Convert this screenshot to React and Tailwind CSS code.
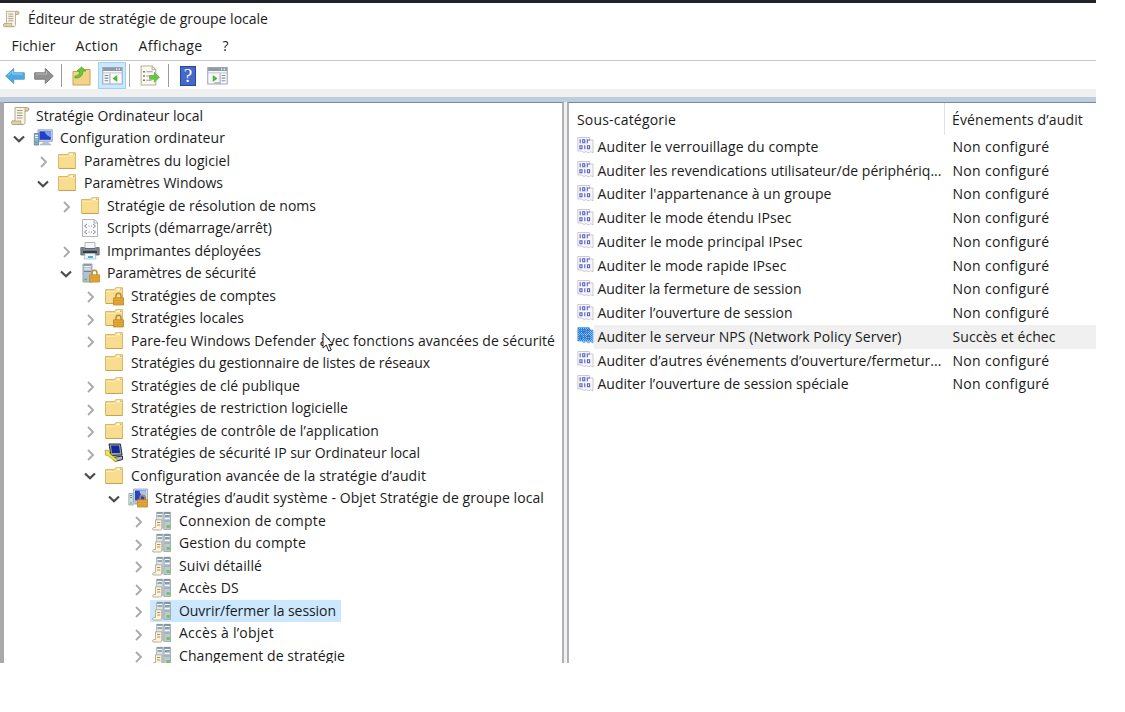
import React, { useLayoutEffect, useRef } from 'react';

// Spreads a line of text over a fixed width by adjusting its tracking.
function Label({ w, children }) {
  const ref = useRef(null);
  useLayoutEffect(() => {
    const el = ref.current;
    el.style.letterSpacing = '0px';
    const natural = el.getBoundingClientRect().width;
    el.style.letterSpacing = `${(w - natural) / children.length}px`;
  }, [w, children]);
  return <span ref={ref} className="inline-block shrink-0 whitespace-pre">{children}</span>;
}

const Svg = ({ size = 'size-5', vb = '0 0 20 20', children }) => (
  <svg className={`${size} shrink-0`} viewBox={vb} fill="none">{children}</svg>
);

const Scroll = ({ size }) => (
  <Svg size={size}>
    <path d="M5 1.5h12.5c1.8 0 1.8 3.5 0 3.5H15v11.5c0 1.5-1 2-2 2H3c-2 0-2-3.5 0-3.5h2z" fill="#f8f3e2" stroke="#b5aa8c" />
    <path d="M15 5V3c0-2 4-2 3.5.5 0 1.500-1 1.500-3.500 1.500zM3 15h8c-1 1.500 0 3.500 2 3.500H3c-2 0-2-3.500 0-3.500z" fill="#dfd2aa" stroke="#ab9f7d" strokeWidth=".8" />
    <path d="M7 4.5h5.5M7 7h5.5M7 9.5h5.5M7 12h5.5" stroke="#a29a88" />
  </Svg>
);
const FolderShape = () => (
  <>
    <path d="M1.500 3.500h9l1.200-1.800h6.800v15.600h-17z" fill="#f6d984" stroke="#d9b86c" />
    <path d="M2 17.500h16.500" stroke="#c9a350" />
    <path d="M2.200 6.300h9.300l1.200-1.600h5.100v12H2.200z" fill="#f8dd90" />
    <path d="M12.500 3.300h3.500" stroke="#fffbe8" strokeWidth="1.600" />
    <path d="M12.500 4.500h4v-1.500" stroke="#c9a350" strokeWidth=".8" />
    <path d="M2 5.500h9.300l1-1h5.700" stroke="#fff0bd" strokeWidth=".8" />
  </>
);
const Folder = () => <Svg><FolderShape /></Svg>;
const Lock = () => (
  <g>
    <path d="M12 12V10c0-3.600 5-3.600 5 0v2" stroke="#b98a3a" strokeWidth="1.500" />
    <path d="M9.500 11.800h10V19h-10z" fill="#e3a935" stroke="#bf8423" strokeWidth=".8" />
    <path d="M10 14.500h9M10 17h9" stroke="#cc9430" strokeWidth=".7" />
  </g>
);
const FolderLock = () => <Svg><FolderShape /><Lock /></Svg>;
const Computer = () => (
  <Svg>
    <path d="M5 1.800h14.300v11.500H5z" fill="#cbd4e6" stroke="#9aa5c0" />
    <path d="M6.500 3.300h11.300v8.500H6.500z" fill="#2040cc" />
    <path d="M11.500 3.300h6.300v6c-3-1-5.500-3-6.300-6z" fill="#7ba0f0" />
    <path d="M10 13.500h5l2 2.500H9z" fill="#b7c1d1" />
    <path d="M1.300 5.500h4.400V17H1.300z" fill="#8fb3c4" stroke="#5a7f96" strokeWidth=".8" />
    <path d="M2 7.500h3M2 9.500h3" stroke="#e7f5f4" />
    <path d="M2.500 14.500h2" stroke="#4ba85a" strokeWidth="1.300" />
    <path d="M7 16.500h11" stroke="#b3bbc8" strokeWidth="1.600" />
  </Svg>
);
const Script = () => (
  <Svg>
    <path d="M2.500 1.500h12l3 3v14h-15z" fill="#fbfbfc" stroke="#b4b6bc" />
    <path d="M14 1.500v3.500h3.500" stroke="#a8abb2" />
    <path d="M7 6 4.500 8 7 10M13 6l2.500 2L13 10M8.500 8h1M11 8h1M7 12l-2.500 2L7 16M13 12l2.500 2-2.500 2M8.500 14h1M11 14h1" stroke="#77798c" strokeWidth=".9" />
  </Svg>
);
const Printer = () => (
  <Svg>
    <path d="M5 1.500h10V8H5z" fill="#f3f6f9" stroke="#a9b5bf" />
    <path d="M.8 6.500h3.500V9h11.400V6.500h3.500V14H.8z" fill="#7b838b" stroke="#636b73" strokeWidth=".8" />
    <path d="M5 7.800h10" stroke="#4a5259" strokeWidth="1.200" />
    <path d="M3 11h14" stroke="#353b41" strokeWidth="2" />
    <path d="M5 12.500h10l1 5.500H4z" fill="#edf4f8" stroke="#a4b2bd" strokeWidth=".7" />
    <path d="M8 16h5" stroke="#45b0d4" strokeWidth="2" />
  </Svg>
);
const ServerLock = () => (
  <Svg>
    <path d="M3 1h9v18H3z" fill="#b3c2cf" stroke="#93a4b3" />
    <path d="M4.500 3.500h6M4.500 6h6" stroke="#f5fafc" strokeWidth="1.200" />
    <path d="M4 2h7M4 8.500h7" stroke="#65798c" strokeWidth=".9" />
    <path d="M4.500 16.500h2.500" stroke="#5bad61" strokeWidth="1.500" />
    <Lock />
  </Svg>
);
const IpSec = () => (
  <Svg>
    <path d="M5 1h11.500l1.500 11-11 .5z" fill="#9a9fac" stroke="#262932" />
    <path d="M7 2.500h8l1 7.500H8z" fill="#10299a" />
    <path d="M8 14.500 18.500 13v3.500L11 18.500z" fill="#b0b4bd" stroke="#292c35" />
    <path d="m1.200 7 3.600.8 1.500 3.200 7 6-1.300 2-7.500-6-3-1z" fill="#f4e732" stroke="#8f8620" strokeWidth=".6" />
  </Svg>
);
const AuditPc = () => (
  <Svg>
    <path d="M5.500 1h14v13h-14z" fill="#cdd6e8" stroke="#a6b2ca" />
    <path d="M7 2.500h11v10H7z" fill="#2345c8" />
    <path d="M11.500 2.500H18v7c-4-1-6-3-6.500-7z" fill="#a9c2f2" />
    <path d="M.8 5.500h4.500V17H.8z" fill="#d2dee2" stroke="#8799a6" strokeWidth=".7" />
    <path d="M2 7.500h2M2 9.500h2M2 15h2" stroke="#52a659" />
    <path d="M6 15.500h4" stroke="#aab3c7" strokeWidth="2" />
    <Lock />
  </Svg>
);
const Servers = () => (
  <Svg>
    <path d="M4.500 1.300h6.300v16H4.500z" fill="#dae4ea" stroke="#a3b1bb" strokeWidth=".8" />
    <path d="M11.800 1.300h6.700v17.200h-6.700z" fill="#bccad4" stroke="#93a2ad" strokeWidth=".8" />
    <path d="M5 2h5.500M12.300 2H18M5.500 5h4.500M13 5h4.500" stroke="#596b78" strokeWidth="1.100" />
    <path d="M5.500 3.500h4.500M13 3.500h4.500M12.700 7.500h5" stroke="#f7fbfd" />
    <path d="M12.500 10h5.500" stroke="#8b9ca8" />
    <path d="M14.500 15.500h3.300" stroke="#79c063" strokeWidth="3" />
    <path d="M3.500 8.800h6.300V17c0 2-1 2-2 2H1.500c-1.500 0-1-2.500.5-2.500h1.500z" fill="#fbf4de" stroke="#a99e7d" strokeWidth=".8" />
    <path d="M5 11.500h3.300M5 14h3.300" stroke="#b98b4e" />
  </Svg>
);
const Bits = ({ active }) => (
  <Svg size="-mt-0.5 size-[17px]" vb="0 0 17 17">
    <path d="M.8.500h11.400l.8 2.500h3V16l-2.500-1.500L12 16l-3-1.500-2 1-2.500-1.500H.8z" fill={active ? '#8fc0f4' : '#f7f7fb'} stroke={active ? '#5a9be0' : '#bcbcc8'} strokeWidth=".8" />
    <path d="M3.200 2.300v4M5.700 2.800h2.100v3H5.700zM10.300 2.300v4M11 3h2M2.900 8.800H5v3H2.900zM7.800 8.300v4M10.500 8.800h2.100v3h-2.100z" stroke={active ? '#2369bd' : '#5a5ec0'} strokeWidth="1.100" />
    {active && <path d="M1 1.500h11M1 3.500h14.500M1 5.500h14.500M1 7.500h14.500M1 9.500h14.500M1 11.500h14.500M1 13.500h14.500" stroke="#2b7fd6" strokeDasharray="1 1" />}
    {active && <path d="M2 2.500h11M2 4.500h14M2 6.500h14M2 8.500h14M2 10.500h14M2 12.500h14" stroke="#2b7fd6" strokeDasharray="1 1" />}
  </Svg>
);

const icons = { scroll: Scroll, folder: Folder, lock: FolderLock, computer: Computer, script: Script, printer: Printer, security: ServerLock, ip: IpSec, audit: AuditPc, servers: Servers };

const tree = [
  ['pl-[5px]', '', 'scroll', 'Stratégie Ordinateur local', 167],
  ['pl-[5px]', 'open', 'computer', 'Configuration ordinateur', 165],
  ['pl-[29px]', 'closed', 'folder', 'Paramètres du logiciel', 146],
  ['pl-[29px]', 'open', 'folder', 'Paramètres Windows', 139],
  ['pl-[52px]', 'closed', 'folder', 'Stratégie de résolution de noms', 209],
  ['pl-[52px]', 'none', 'script', 'Scripts (démarrage/arrêt)', 165],
  ['pl-[52px]', 'closed', 'printer', 'Imprimantes déployées', 154],
  ['pl-[52px]', 'open', 'security', 'Paramètres de sécurité', 149],
  ['pl-[76px]', 'closed', 'lock', 'Stratégies de comptes', 145],
  ['pl-[76px]', 'closed', 'lock', 'Stratégies locales', 113],
  ['pl-[76px]', 'closed', 'folder', 'Pare-feu Windows Defender avec fonctions avancées de sécurité', 424],
  ['pl-[76px]', 'none', 'folder', 'Stratégies du gestionnaire de listes de réseaux', 299],
  ['pl-[76px]', 'closed', 'folder', 'Stratégies de clé publique', 169],
  ['pl-[76px]', 'closed', 'folder', 'Stratégies de restriction logicielle', 217],
  ['pl-[76px]', 'closed', 'folder', 'Stratégies de contrôle de l’application', 248],
  ['pl-[76px]', 'closed', 'ip', 'Stratégies de sécurité IP sur Ordinateur local', 289],
  ['pl-[76px]', 'open', 'folder', 'Configuration avancée de la stratégie d’audit', 295],
  ['pl-[100px]', 'open', 'audit', 'Stratégies d’audit système - Objet Stratégie de groupe local', 389],
  ['pl-[124px]', 'closed', 'servers', 'Connexion de compte', 147],
  ['pl-[124px]', 'closed', 'servers', 'Gestion du compte', 127],
  ['pl-[124px]', 'closed', 'servers', 'Suivi détaillé', 83],
  ['pl-[124px]', 'closed', 'servers', 'Accès DS', 60],
  ['pl-[124px]', 'closed', 'servers', 'Ouvrir/fermer la session', 157],
  ['pl-[124px]', 'closed', 'servers', 'Accès à l’objet', 95],
  ['pl-[124px]', 'closed', 'servers', 'Changement de stratégie', 166],
];

const audits = [
  ['Auditer le verrouillage du compte', 221],
  ['Auditer les revendications utilisateur/de périphériq...', 344],
  ["Auditer l'appartenance à un groupe", 234],
  ['Auditer le mode étendu IPsec', 194],
  ['Auditer le mode principal IPsec', 205],
  ['Auditer le mode rapide IPsec', 189],
  ['Auditer la fermeture de session', 204],
  ['Auditer l’ouverture de session', 195],
  ['Auditer le serveur NPS (Network Policy Server)', 304],
  ['Auditer d’autres événements d’ouverture/fermetur...', 344],
  ['Auditer l’ouverture de session spéciale', 251],
];

function Chevron({ state }) {
  return (
    <span className="flex w-[21px] shrink-0 pl-[3px] pt-[3px]">
      <svg className="size-3" viewBox="0 0 12 12" fill="none">
        {state === 'open' && <path d="m1 2.500 5 4.700 5-4.700" stroke="#4a4a4a" strokeWidth="2.200" />}
        {state === 'closed' && <path d="m4 1 5 5-5 5" stroke="#ababab" strokeWidth="1.900" />}
      </svg>
    </span>
  );
}

function TreeRow({ row }) {
  const [indent, state, icon, text, w] = row;
  const Icon = icons[icon];
  const selected = text.startsWith('Ouvrir');
  return (
    <div className={`flex h-[22.5px] shrink-0 items-center ${indent}`}>
      {state && <Chevron state={state} />}
      <span className={`flex h-full items-center ${selected ? 'bg-[#cce8ff]' : ''} ${state ? 'pl-0.5 pr-[5px]' : ''}`}>
        <Icon />
        <span className={state ? 'pl-[7px]' : 'pl-[6px]'}><Label w={w}>{text}</Label></span>
      </span>
    </div>
  );
}

const WindowPane = ({ flip }) => (
  <Svg size="size-[21px]">
    <path d="M.7 2.500h18.600V18H.7z" fill="#f8f9fb" stroke="#a2a8b2" />
    <path d="M1 4.200h18" stroke="#8e99ac" strokeWidth="3" />
    <path d="M13.500 4h1M16 4h1" stroke="#fff" strokeWidth="1.500" />
    <path d="M1 7.500h18" stroke="#c0c5cd" />
    {flip ? (
      <>
        <path d="M12.500 8v10M7 17h5" stroke="#a2a8b2" /><path d="M14 10h3.500M14 12.500h3.500M14 15h3.500" stroke="#8090ad" />
        <path d="m5.500 9.500 4.500 3.300-4.500 3.400z" fill="#4fb536" />
      </>
    ) : (
      <>
        <path d="M7.500 8v10" stroke="#a2a8b2" /><path d="M2.500 10H6M2.500 12.500H6M2.500 15H6" stroke="#7486aa" />
        <path d="m14.500 9.500-4.500 3.300 4.500 3.400z" fill="#4fb536" />
      </>
    )}
  </Svg>
);

function Toolbar() {
  return (
    <div className="flex h-[29px] shrink-0 items-center border-t border-[#c5c5c5] pl-[5px] pt-px">
      <Svg><path d="m.7 10 8-7.500v4.300h10.600v6.400H8.700v4.300z" fill="#49aae6" stroke="#5b9cc8" /><path d="M3 9.500 7.700 5v3h10" stroke="#8fd4f6" /></Svg>
      <span className="w-[9px]" />
      <Svg><path d="m19.300 10-8-7.500v4.300H.7v6.400h10.600v4.300z" fill="#929292" stroke="#7b7b7b" /><path d="M2 8h10.500V5" stroke="#b7b7b7" /></Svg>
      <span className="ml-[7px] h-[23px] w-px bg-[#9c9c9c]" />
      <span className="w-[10px]" />
      <Svg><path d="M1 5.500h8l1.500-2H18V19H1z" fill="#f3d486" stroke="#c7a052" /><path d="M3 10c4 0 4.500-3 4.500-5H5l4.500-4L14 5h-3c0 5-3.500 7.500-8 7z" fill="#6ac738" stroke="#4ea22b" strokeWidth=".7" /></Svg>
      <span className="ml-[6px] flex h-[27px] w-7 items-center justify-center border border-[#99d1ff] bg-[#cce8ff]"><WindowPane /></span>
      <span className="ml-[3px] h-[23px] w-px bg-[#a8a8a8]" />
      <span className="w-[9px]" />
      <Svg size="size-[21px]"><path d="M2 1h10.500L16 4.500V19H2z" fill="#fdfbf0" stroke="#b5b19c" /><path d="M12.500 1v3.500H16" stroke="#b5b19c" /><path d="M4 6.500h1.500M4 10.500h1.500M4 14.500h1.500" stroke="#555" strokeWidth="1.500" /><path d="M7 6.500h6M7 10.500h5M7 14.500h5" stroke="#a096b5" /><path d="M10 10h4.500V7l5 4.700-5 4.800v-3H10z" fill="#62c845" stroke="#55ad3c" strokeWidth=".6" /></Svg>
      <span className="ml-[8px] h-[23px] w-px bg-[#9c9c9c]" />
      <span className="ml-[11px] flex h-5 w-4 items-center justify-center border border-[#2c459c] bg-[#4468cc] font-['Liberation_Serif',serif] text-[19px] leading-none text-white">?</span>
      <span className="w-[11px]" />
      <WindowPane flip />
    </div>
  );
}

export default function App() {
  return (
    <div className="h-[712px] w-[1125px] overflow-hidden bg-white font-['Open_Sans','Noto_Sans',sans-serif] text-[14px] leading-5 text-[#1b1b1b]">
      <div className="relative flex h-[663px] w-[1096px] flex-col overflow-hidden">
        <div className="h-[3px] shrink-0 bg-[#20242a]" />
        <div className="flex h-[31px] shrink-0 items-center pl-0.5"><Scroll size="size-[18px]" /><span className="pl-[8px]"><Label w={240}>Éditeur de stratégie de groupe locale</Label></span></div>
        <div className="flex h-[26px] shrink-0 items-start gap-5 pl-[11.5px] pt-0.5"><Label w={44}>Fichier</Label><Label w={43}>Action</Label><Label w={64}>Affichage</Label><Label w={7}>?</Label></div>
        <Toolbar />
        <div className="h-2 shrink-0 bg-[#f0f0f0]" />
        <div className="h-[5px] shrink-0 bg-[#bccde0]" />
        <div className="flex min-h-0 flex-1 bg-[#f0f0f0]">
          <div className="w-1 shrink-0 bg-[#a9a9ab]" />
          <div className="flex w-[560px] shrink-0 flex-col overflow-hidden border-r-2 border-t border-r-[#b1b2b6] border-t-[#75899f] bg-white pl-[1px] pt-[1.5px]">
            {tree.map((row) => <TreeRow key={row[3]} row={row} />)}
          </div>
          <div className="w-[3px] shrink-0 bg-[#f0f0f0]" />
          <div className="min-w-0 flex-1 border-l-2 border-t border-l-[#b1b2b6] border-t-[#75899f] bg-white">
            <div className="flex h-[32px]">
              <div className="w-[376px] shrink-0 border-r border-[#e2e2e2] pl-2 pt-[7px]"><Label w={99}>Sous-catégorie</Label></div>
              <div className="pl-[7px] pt-[7px]"><Label w={131}>Événements d’audit</Label></div>
            </div>
            {audits.map(([text, w], i) => (
              <div key={text} className="flex h-[23.75px] items-center pl-2">
                <Bits active={i === 8} />
                <div className={`flex h-full min-w-0 flex-1 items-center pl-[3.5px] ${i === 8 ? 'bg-[#f0f0f0]' : ''}`}>
                  <span className="w-[355px] shrink-0"><Label w={w}>{text}</Label></span>
                  <Label w={i === 8 ? 103 : 97}>{i === 8 ? 'Succès et échec' : 'Non configuré'}</Label>
                </div>
              </div>
            ))}
          </div>
        </div>
        <svg className="absolute left-[322px] top-[332px] h-5 w-3" viewBox="0 0 12 20"><path d="M1 1v15l3.300-3 2.400 6 2.600-1-2.500-5.500H11z" fill="white" stroke="#222" /></svg>
      </div>
    </div>
  );
}
